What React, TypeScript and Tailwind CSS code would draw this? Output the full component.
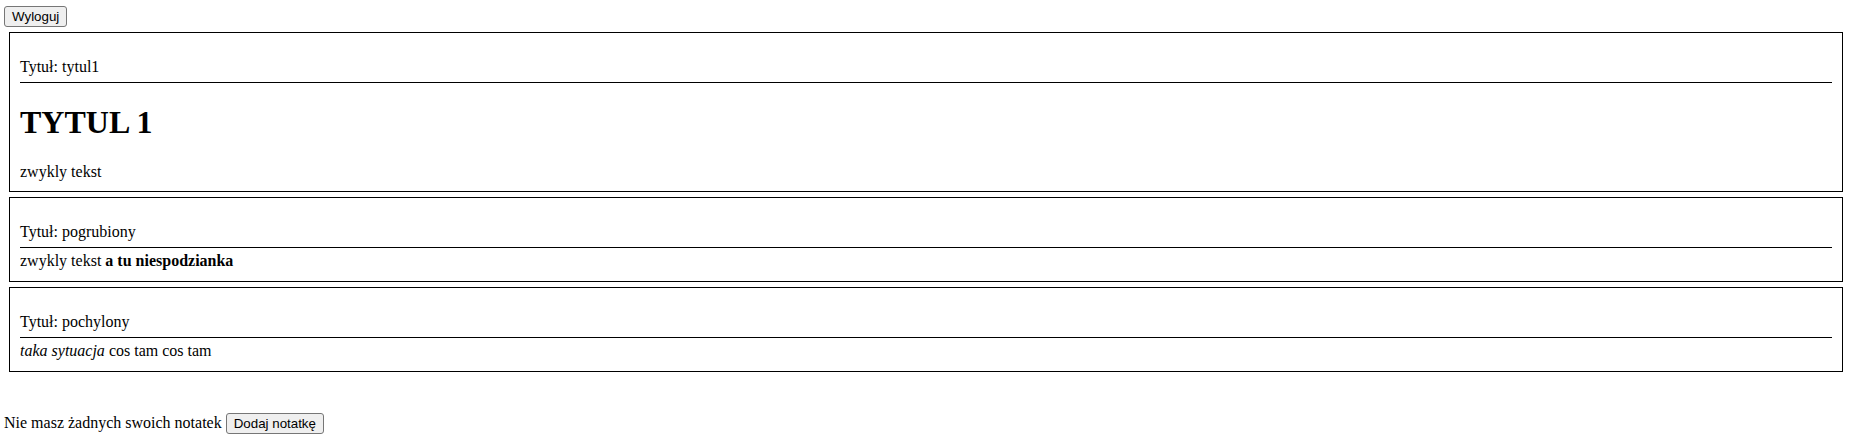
const notes = [
  { title: "tytul1", kind: "h1" },
  { title: "pogrubiony", kind: "bold" },
  { title: "pochylony", kind: "italic" },
];

const NoteBody = ({ kind }: { kind: string }) => {
  if (kind === "h1") {
    return (
      <>
        <h1 className="my-[21.44px] text-[32px] font-bold leading-[36.8px]">TYTUL 1</h1>
        <p className="leading-[18.4px]">zwykly tekst</p>
      </>
    );
  }
  if (kind === "bold") {
    return (
      <p className="leading-[18.4px]">
        zwykly tekst <strong className="font-bold">a tu niespodzianka</strong>
      </p>
    );
  }
  return (
    <p className="leading-[18.4px]">
      <em className="italic">taka sytuacja</em> cos tam cos tam
    </p>
  );
};

const App = () => {
  return (
    <div className="min-h-screen w-full bg-white px-[4px] pt-[6px] text-[16px] text-black font-['Liberation_Serif','Times_New_Roman',serif]">
      <div className="flex">
        <button className="rounded-[3px] border border-[#767676] bg-[#efefef] px-[7px] py-[2px] text-[13.33px] leading-[normal] text-black font-['Liberation_Sans',Arial,sans-serif]">
          Wyloguj
        </button>
      </div>

      {notes.map((n) => (
        <div key={n.title} className="mt-[5px] ml-[5px] mr-[3px] border border-black p-[10px]">
          <p className="mt-[15px] leading-[18.4px]">Tytuł: {n.title}</p>
          <hr className="mt-[5.5px] mb-[4.5px] border-0 border-t border-black" />
          <NoteBody kind={n.kind} />
        </div>
      ))}

      <p className="mt-[41px] leading-[normal]">
        Nie masz żadnych swoich notatek{" "}
        <button className="rounded-[3px] border border-[#767676] bg-[#efefef] px-[7px] py-[2px] text-[13.33px] leading-[normal] text-black font-['Liberation_Sans',Arial,sans-serif]">
          Dodaj notatkę
        </button>
      </p>
    </div>
  );
};

export default App;
